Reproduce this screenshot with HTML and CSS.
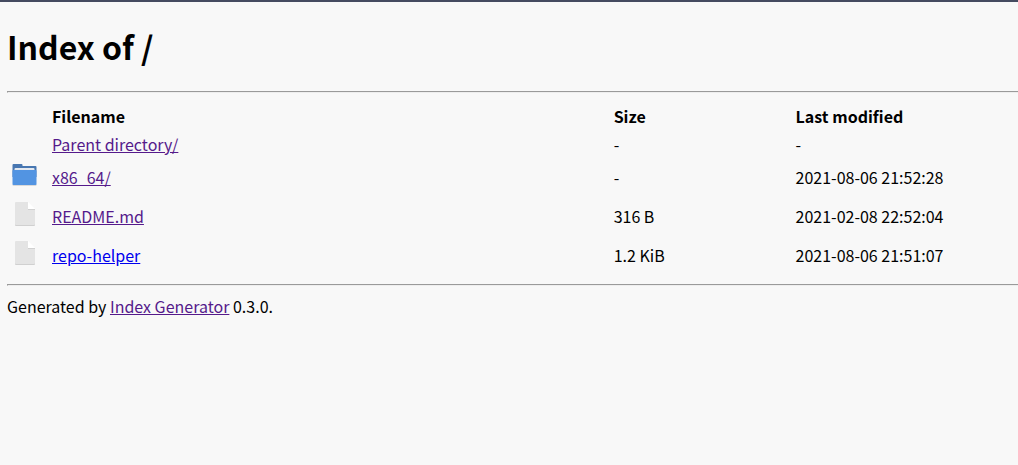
FILE: index.html
```
<!DOCTYPE html>
<html lang="en">
<head>
<meta charset="utf-8">
<title>Index of /</title>
<link rel="stylesheet" href="styles.css">
</head>
<body>
<h1>Index of /</h1>
<hr>
<table class="listing">
<thead>
<tr><th class="col-icon"></th><th class="col-name">Filename</th><th class="col-size">Size</th><th class="col-date">Last modified</th></tr>
</thead>
<tbody>
<tr><td></td><td><a class="visited" href="../">Parent directory/</a></td><td>-</td><td>-</td></tr>
<tr class="folder-row"><td><svg class="icon" viewBox="0 -2 26 26" aria-hidden="true"><path fill="#d9d9d9" d="M.5 20h24v1q0 1-1 1h-22q-1 0-1-1z"/><path fill="#4877b1" d="M.5 1q0-1 1-1h8q1 0 1 1v1h13q1 0 1 1v10H.5z"/><rect x="2.5" y="4" width="20" height="5" rx="1" fill="#e4e9f0"/><path fill="#5294e2" d="M.5 7q0-1 1-1h22q1 0 1 1v13q0 1-1 1h-22q-1 0-1-1z"/></svg></td><td><a class="visited" href="x86_64/">x86_64/</a></td><td>-</td><td>2021-08-06 21:52:28</td></tr>
<tr class="file-row"><td><svg class="icon" viewBox="0 0 26 26" aria-hidden="true"><path fill="#d0d0d0" d="M3 23h20v1q0 1-1 1H4q-1 0-1-1z"/><path fill="#e4e4e4" d="M4 1h12v7h7v15q0 1-1 1H4q-1 0-1-1V2q0-1 1-1z"/><path fill="#d0d0d0" d="M16 8h7v1h-7z"/><path fill="#fff" d="M16 1l7 7h-7z"/></svg></td><td><a class="visited" href="README.md">README.md</a></td><td>316 B</td><td>2021-02-08 22:52:04</td></tr>
<tr class="file-row"><td><svg class="icon" viewBox="0 0 26 26" aria-hidden="true"><path fill="#d0d0d0" d="M3 23h20v1q0 1-1 1H4q-1 0-1-1z"/><path fill="#e4e4e4" d="M4 1h12v7h7v15q0 1-1 1H4q-1 0-1-1V2q0-1 1-1z"/><path fill="#d0d0d0" d="M16 8h7v1h-7z"/><path fill="#fff" d="M16 1l7 7h-7z"/></svg></td><td><a href="repo-helper">repo-helper</a></td><td>1.2 KiB</td><td>2021-08-06 21:51:07</td></tr>
</tbody>
</table>
<hr>
<footer>Generated by <a class="visited" href="#generator">Index Generator</a> 0.3.0.</footer>
</body>
</html>
```
FILE: styles.css
```
body {
  margin: 0;
  padding: 0 0 0 7px;
  border-top: 2px solid #454b60;
  background: #f8f8f8;
  color: #000;
  font: 16px/24px "Noto Sans CJK SC", "Noto Sans", sans-serif;
}
h1 {
  margin: 20px 0 21px;
  font-size: 32px;
  line-height: 48px;
}
hr {
  margin: 0;
  border: 1px solid #9a9a9a;
  border-bottom-color: #eee;
  border-right: 0;
}
.listing {
  width: 100%;
  margin: 9px 0 10px;
  border-collapse: collapse;
  table-layout: fixed;
}
th, td {
  height: 28px;
  padding: 0;
  text-align: left;
}
.col-icon { width: 45px; }
.col-size { width: 18%; }
.col-date { width: 22%; }
.folder-row td { height: 38px; }
.file-row td { height: 39px; }
.icon {
  display: block;
  width: 26px;
  height: 26px;
  margin: 0 0 4px 5px;
}
a { color: #0000ee; }
a.visited { color: #551a8b; }
footer { margin-top: 8px; }
```
